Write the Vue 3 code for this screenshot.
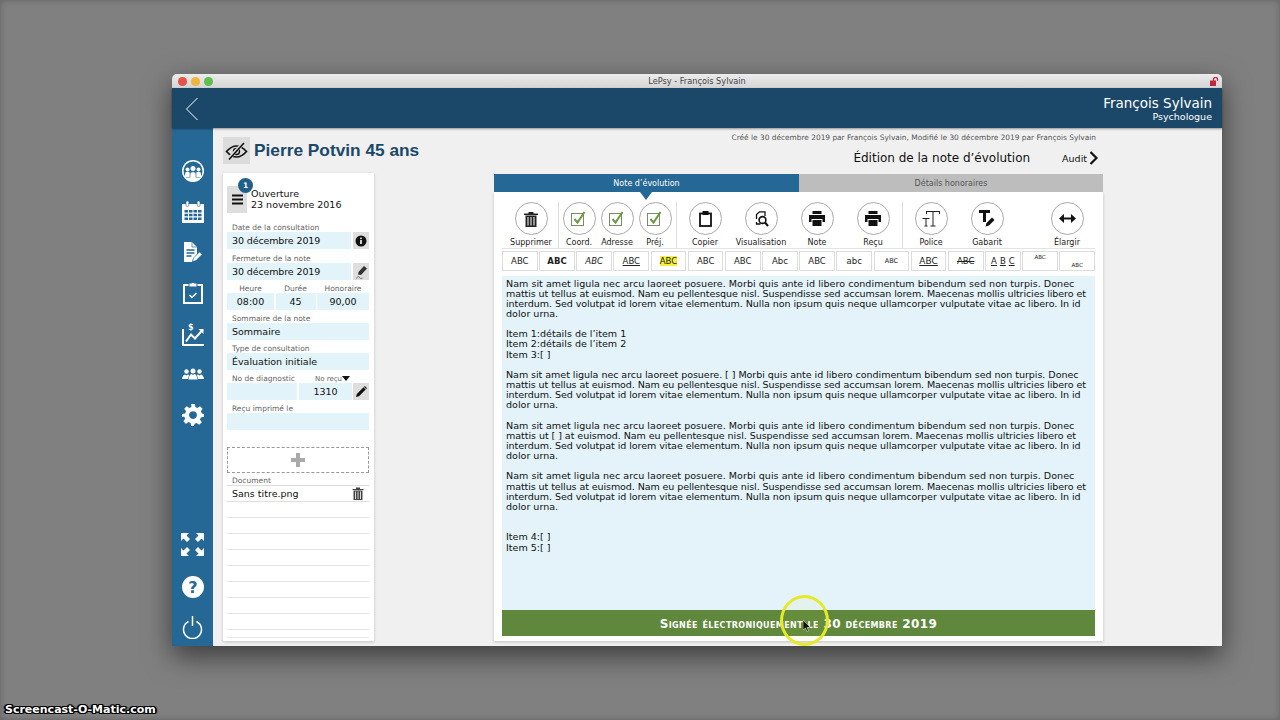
<script setup>
const fmtA = [
  ['ABC',''],['ABC','b'],['ABC','i'],['ABC','u'],['ABC','hl'],['ABC','n'],['ABC','n'],['Abc','n'],['ABC','n'],['abc','n'],['ABC','sm'],['ABC','u2'],['ABC','st'],['A B C','sp'],['ABC','sup'],['ABC','sub']
]
const L1 = 'Nam sit amet ligula nec arcu laoreet posuere. Morbi quis ante id libero condimentum bibendum sed non turpis. Donec'
const L2 = 'mattis ut tellus at euismod. Nam eu pellentesque nisl. Suspendisse sed accumsan lorem. Maecenas mollis ultricies libero et'
const L3 = 'interdum. Sed volutpat id lorem vitae elementum. Nulla non ipsum quis neque ullamcorper vulputate vitae ac libero. In id'
const L4 = 'dolor urna.'
const para1 = [[L1,'la'],[L2,'lb'],[L3,'lc'],[L4,'']]
const para2 = [['Nam sit amet ligula nec arcu laoreet posuere. [ ] Morbi quis ante id libero condimentum bibendum sed non turpis. Donec','ld'],[L2,'lb'],[L3,'lc'],[L4,'']]
const para3 = [[L1,'la'],['mattis ut [ ] at euismod. Nam eu pellentesque nisl. Suspendisse sed accumsan lorem. Maecenas mollis ultricies libero et','ld'],[L3,'lc'],[L4,'']]
const items = [['Item 1:détails de l’item 1',''],['Item 2:détails de l’item 2',''],['Item 3:[ ]','']]
const blocks = [para1,items,para2,para3,para1]
const lines = Array.from({length:8})
</script>

<template>
  <div class="desk">
    <div class="win">
      <div class="titlebar">
        <div class="lights"><i class="r"></i><i class="y"></i><i class="g"></i></div>
        <span class="wtitle">LePsy - François Sylvain</span>
        <svg class="lock" width="9" height="9" viewBox="0 0 9 9"><rect x="0" y="3.500" width="6" height="5.500" fill="#c0253c"/><path d="M3.500 4V2.300a2 2 0 0 1 4 0v1.500" fill="none" stroke="#c0253c" stroke-width="1.300"/></svg>
      </div>
      <header class="head">
        <svg class="back" width="14" height="24" viewBox="0 0 14 24"><path d="M12.500 1L1.500 12l11 11" fill="none" stroke="#fff" stroke-width="1"/></svg>
        <div class="user"><div class="uname">François Sylvain</div><div class="urole">Psychologue</div></div>
      </header>
      <div class="body">
        <nav class="side">
          <div class="side-top">
            <div class="slot"><svg width="22" height="22" viewBox="0 0 22 22"><circle cx="11" cy="11" r="11" fill="#fff"/><circle cx="11" cy="11" r="9.500" fill="#256795"/><g fill="#fff"><circle cx="5.500" cy="9.500" r="2"/><circle cx="16.500" cy="9.500" r="2"/><path d="M3 17v-3.500q0-1.800 2.500-1.800t2.500 1.800V17z"/><path d="M14 17v-3.500q0-1.800 2.500-1.800t2.500 1.800V17z"/><path d="M8 20v-6q0-2.300 3-2.300t3 2.300v6z" stroke="#256795" stroke-width=".7"/><circle cx="11" cy="8.500" r="2.500"/></g><path d="M3 17.500Q6 21.500 11 21.500t8-4z" fill="#fff"/></svg></div>
            <div class="slot"><svg width="22" height="22" viewBox="0 0 22 22"><path d="M0 3h22v19H0z" fill="#fff"/><g fill="#256795"><path d="M2.500 9h3.500v2.500H2.500zM7 9h3.500v2.500H7zM11.500 9H15v2.500h-3.500zM16 9h3.500v2.500H16zM2.500 12.800h3.500v2.500H2.500zM7 12.800h3.500v2.500H7zM11.500 12.800H15v2.500h-3.500zM16 12.800h3.500v2.500H16zM2.500 16.600h3.500v2.500H2.500zM7 16.600h3.500v2.500H7zM11.500 16.600H15v2.500h-3.500zM16 16.600h3.500v2.500H16z"/></g><g fill="#fff" stroke="#256795" stroke-width=".6"><rect x="4" y="0" width="2.800" height="5.500" rx="1.300"/><rect x="15.200" y="0" width="2.800" height="5.500" rx="1.300"/></g></svg></div>
            <div class="slot"><svg width="18" height="20" viewBox="0 0 18 20"><path d="M0 0h8l5 5v7l-4 5-1 3H0z" fill="#fff"/><path d="M2.500 8h8M2.500 11h8M2.500 14h5" stroke="#256795" stroke-width="1.300"/><path d="M8 0v5h5" fill="none" stroke="#256795" stroke-width=".7"/><path d="M8.500 19.500l1-3.500 6-6 2.500 2.500-6 6z" fill="#fff" stroke="#256795" stroke-width=".5"/></svg></div>
            <div class="slot"><svg width="20" height="22" viewBox="0 0 20 22"><path d="M5.500 3H1v18h18V3h-4.500" fill="none" stroke="#fff" stroke-width="2"/><path d="M6.500 4.500V1.500h2.300a1.300 1.300 0 0 1 2.400 0h2.300v3z" fill="#fff"/><path d="M6.500 13l2.500 2.500 4.500-4.500" fill="none" stroke="#fff" stroke-width="1.400"/></svg></div>
            <div class="slot"><svg width="22" height="25" viewBox="0 0 22 25"><path d="M1 8v16h21" fill="none" stroke="#fff" stroke-width="2"/><path d="M4 20.500l5-7 4 4 7-8" fill="none" stroke="#fff" stroke-width="2"/><path d="M16.500 8h5v5z" fill="#fff"/><text x="6" y="8.500" class="dollar">$</text></svg></div>
            <div class="slot"><svg width="22" height="12" viewBox="0 0 22 12"><g fill="#fff"><circle cx="4.500" cy="3.500" r="2.200"/><circle cx="11" cy="3" r="2.500"/><circle cx="17.500" cy="3.500" r="2.200"/><path d="M0 11q.5-4 3-4.500l1.500 1 1.500-1 1 .5-1 4z"/><path d="M22 11q-.5-4-3-4.500l-1.500 1-1.500-1-1 .5 1 4z"/><path d="M6.500 11.500q.5-5 3-5.500l1.500 1 1.500-1q2.500.5 3 5.500z"/></g></svg></div>
            <div class="slot"><svg width="22" height="22" viewBox="0 0 24 24"><path fill="#fff" fill-rule="evenodd" d="M10 0h4l.6 3.300 2.300 1L19.700 2.400l2.800 2.800-1.900 2.800 1 2.300L24 10.900v3l-3.400.8-1 2.300 2 2.800-2.800 2.800-2.800-2-2.300 1L13 24h-3l-.6-3.300-2.300-1-2.800 2-2.800-2.800 2-2.800-1-2.300L0 13.900v-3l3.400-.6 1-2.300-2-2.800 2.800-2.800 2.800 2 2.300-1zM12 7.800a4.300 4.300 0 1 0 .01 0z"/></svg></div>
          </div>
          <div class="side-bot">
            <svg class="ga" width="23" height="23" viewBox="0 0 23 23"><g fill="#fff"><path d="M0 0h8l-2.500 2.500L9 6 6 9 2.500 5.500 0 8z"/><path d="M23 0h-8l2.500 2.500L14 6l3 3 3.500-3.500L23 8z"/><path d="M0 23h8l-2.500-2.500L9 17l-3-3-3.500 3.500L0 15z"/><path d="M23 23h-8l2.500-2.500L14 17l3-3 3.500 3.500L23 15z"/></g></svg>
            <svg class="gb" width="22" height="22" viewBox="0 0 22 22"><circle cx="11" cy="11" r="11" fill="#fff"/><text x="11" y="17" text-anchor="middle" class="qm">?</text></svg>
            <svg width="21" height="23" viewBox="0 0 21 23"><path d="M6.500 5.500a9 9 0 1 0 8 0" fill="none" stroke="#fff" stroke-width="1.500"/><path d="M10.500 0v10" stroke="#fff" stroke-width="1.500"/></svg>
          </div>
        </nav>
        <main class="main">
          <div class="left">
            <div class="patient">
              <div class="eyebtn"><svg width="23" height="18" viewBox="0 0 22 18"><path d="M1 9.500Q6 4 11 4t10 5.500Q16 15 11 15T1 9.500z" fill="none" stroke="#111" stroke-width="1.700"/><circle cx="11" cy="9.500" r="3" fill="none" stroke="#111" stroke-width="1.400"/><path d="M3 17L18 1" stroke="#dcdcdc" stroke-width="3.400"/><path d="M3.500 17.500L18.500 1" stroke="#111" stroke-width="1.600"/></svg></div>
              <h1>Pierre Potvin 45 ans</h1>
            </div>
            <section class="card">
              <div class="open">
                <div class="menu"><span class="badge">1</span><svg width="11" height="11" viewBox="0 0 11 11"><path d="M0 1.500h11M0 5.500h11M0 9.500h11" stroke="#111" stroke-width="1.900"/></svg></div>
                <div class="opentxt">Ouverture<br>23 novembre 2016</div>
              </div>
              <label class="lab l1">Date de la consultation</label>
              <div class="row"><div class="fld grow date">30 décembre 2019</div><div class="ico"><svg width="12" height="12" viewBox="0 0 12 12"><circle cx="6" cy="6" r="5.500" fill="#111"/><rect x="5.200" y="5" width="1.600" height="4" fill="#fff"/><rect x="5.200" y="2.600" width="1.600" height="1.500" fill="#fff"/></svg></div></div>
              <label class="lab l2">Fermeture de la note</label>
              <div class="row"><div class="fld grow date">30 décembre 2019</div><div class="ico"><svg width="13" height="14" viewBox="0 0 13 14"><path d="M3 9.500L3.500 7l5.500-6 3 2.500-6 6.500z" fill="#333"/><path d="M1 13.500q3-3 3.500-1t3 .5" fill="none" stroke="#444" stroke-width=".7"/></svg></div></div>
              <div class="trio-lab"><span>Heure</span><span>Durée</span><span>Honoraire</span></div>
              <div class="trio"><div class="fld c">08:00</div><div class="fld c">45</div><div class="fld c">90,00</div></div>
              <label class="lab">Sommaire de la note</label>
              <div class="fld">Sommaire</div>
              <label class="lab">Type de consultation</label>
              <div class="fld">Évaluation initiale</div>
              <div class="diag-lab"><span>No de diagnostic</span><span class="norecu">No reçu<i class="tri"></i></span></div>
              <div class="row"><div class="fld d1"></div><div class="fld d2 c">1310</div><div class="ico"><svg width="11" height="11" viewBox="0 0 11 11"><path d="M0 11l.8-3L7.500 1.300l2.200 2.200L3 10.200z" fill="#111"/><path d="M8 .8l.8-.8 2.200 2.200-.8.8z" fill="#111"/></svg></div></div>
              <label class="lab">Reçu imprimé le</label>
              <div class="fld"></div>
              <div class="drop"><svg width="14" height="14" viewBox="0 0 14 14"><path d="M5 0h4v5h5v4H9v5H5V9H0V5h5z" fill="#aaa"/></svg></div>
              <label class="lab doc">Document</label>
              <div class="docrow"><span>Sans titre.png</span><svg width="12" height="13" viewBox="0 0 12 13"><path d="M.5 2h11v1H.5zM4 .5h4V2H4zM1.500 3.500h9V13h-9z" fill="#444"/><path d="M3.500 4.500v7.500M6 4.500v7.500M8.500 4.500v7.500" stroke="#fff" stroke-width=".8"/></svg></div>
              <div v-for="(l,i) in lines" :key="i" class="docline"></div>
              <div class="doclast"></div>
            </section>
          </div>
          <div class="right">
            <div class="created">Créé le 30 décembre 2019 par François Sylvain, Modifié le 30 décembre 2019 par François Sylvain</div>
            <div class="edit"><span class="etitle">Édition de la note d’évolution</span><span class="audit">Audit<svg width="9" height="14" viewBox="0 0 9 14"><path d="M1.500 1l6 6-6 6" fill="none" stroke="#111" stroke-width="2.200"/></svg></span></div>
            <div class="tabs"><div class="tab on">Note d’évolution</div><div class="tab off">Détails honoraires</div></div>
            <section class="panel">
              <div class="tools">
                <div class="tool"><span class="circ"><svg width="14" height="16" viewBox="0 0 14 16"><path d="M0 2.500h14V4H0zM4.500 1h5v1.500h-5zM1.500 4.500h11V16h-11z" fill="#222"/><path d="M4 6v8.500M7 6v8.500M10 6v8.500" stroke="#fff" stroke-width="1"/></svg></span>Supprimer</div>
                <i class="sep s1"></i>
                <div class="tool w2"><span class="circ"><svg width="16" height="15" viewBox="0 0 16 15"><rect x=".5" y="2.500" width="12" height="12" fill="none" stroke="#7a8a6a"/><path d="M3.500 8l3 3.500L13.500 1" fill="none" stroke="#6d9a3f" stroke-width="2"/></svg></span>Coord.</div>
                <div class="tool w2"><span class="circ"><svg width="16" height="15" viewBox="0 0 16 15"><rect x=".5" y="2.500" width="12" height="12" fill="none" stroke="#7a8a6a"/><path d="M3.500 8l3 3.500L13.500 1" fill="none" stroke="#6d9a3f" stroke-width="2"/></svg></span>Adresse</div>
                <div class="tool w2"><span class="circ"><svg width="16" height="15" viewBox="0 0 16 15"><rect x=".5" y="2.500" width="12" height="12" fill="none" stroke="#7a8a6a"/><path d="M3.500 8l3 3.500L13.500 1" fill="none" stroke="#6d9a3f" stroke-width="2"/></svg></span>Préj.</div>
                <i class="sep s2"></i>
                <div class="tool"><span class="circ"><svg width="13" height="16" viewBox="0 0 13 16"><rect x="1" y="2.500" width="11" height="12.500" fill="none" stroke="#111" stroke-width="1.800"/><rect x="3.500" y="0" width="6" height="4" fill="#111"/></svg></span>Copier</div>
                <div class="tool"><span class="circ"><svg width="15" height="16" viewBox="0 0 15 16"><path d="M2.500 8V3.500L5.500.8h5.500V5" fill="none" stroke="#111" stroke-width="1.300"/><path d="M2.500 11v2h4" fill="none" stroke="#111" stroke-width="1.300"/><circle cx="8.500" cy="9" r="3.400" fill="none" stroke="#111" stroke-width="1.600"/><path d="M11 11.500l3 3.500" stroke="#111" stroke-width="2"/></svg></span>Visualisation</div>
                <div class="tool"><span class="circ"><svg width="16" height="15" viewBox="0 0 16 15"><path d="M3.500 0h9v3h-9zM0 4h16v7h-2.500V8h-11v3H0zM3.500 9h9v6h-9z" fill="#111"/></svg></span>Note</div>
                <div class="tool"><span class="circ"><svg width="16" height="15" viewBox="0 0 16 15"><path d="M3.500 0h9v3h-9zM0 4h16v7h-2.500V8h-11v3H0zM3.500 9h9v6h-9z" fill="#111"/></svg></span>Reçu</div>
                <i class="sep s3"></i>
                <div class="tool"><span class="circ"><svg width="18" height="17" viewBox="0 0 18 17"><path d="M4.500 1.500h13M11 1.500V16M8.500 16h5M0.500 8.500h7M4 8.500V16M2.500 16h3" fill="none" stroke="#222" stroke-width="1"/><path d="M4.500 1v3M17.500 1v3" stroke="#222" stroke-width="1"/></svg></span>Police</div>
                <div class="tool"><span class="circ"><svg width="17" height="17" viewBox="0 0 17 17"><path d="M0 0h11v3H7v9H4V3H0z" fill="#111"/><path d="M6.500 16.500l1-3.500L13 7.500l2.500 2.500L10 15.500z" fill="#111"/></svg></span>Gabarit</div>
                <div class="tool w9"><span class="circ"><svg width="17" height="9" viewBox="0 0 17 9"><path d="M4 3.500h9v2H4z" fill="#111"/><path d="M5 0v9L0 4.500zM12 0v9l5-4.500z" fill="#111"/></svg></span>Élargir</div>
              </div>
              <div class="fmt">
                <div v-for="(f,i) in fmtA" :key="i" class="fb" :class="f[1]"><span v-for="(w,k) in f[0].split(' ')" :key="k">{{ w }}</span></div>
              </div>
              <div class="note">
                <div class="notetext">
                  <template v-for="(b,i) in blocks" :key="i">
                    <p><span v-for="(l,j) in b" :key="j" class="ln" :class="l[1]">{{ l[0] }}</span></p>
                  </template>
                  <p class="items"><span class="ln">Item 4:[ ]</span><span class="ln">Item 5:[ ]</span></p>
                </div>
                <div class="sign">
                  <span class="signtxt">Signée électroniquement le 30 décembre 2019</span>
                  <span class="halo"></span>
                  <svg class="cursor" width="8" height="12" viewBox="0 0 8 12"><path d="M0 0v10l2.500-2 1.500 3.500 1.500-.7L4 7.500h3.500z" fill="#111" stroke="#fff" stroke-width=".5"/></svg>
                </div>
              </div>
            </section>
          </div>
        </main>
      </div>
    </div>
    <div class="wm">Screencast-O-Matic.com</div>
  </div>
</template>

<style>
html,body{margin:0;padding:0;background:#808080}
</style>
<style scoped>
.desk{position:relative;width:1280px;height:720px;overflow:hidden;background:#808080;box-shadow:inset 0 0 6px rgba(0,0,0,.25);font-family:"DejaVu Sans",sans-serif;color:#111;padding:74px 58px 0 172px;box-sizing:border-box}
.win{width:1050px;height:572px;display:flex;flex-direction:column;border-radius:5px 5px 0 0;box-shadow:0 10px 28px rgba(0,0,0,.55);position:relative}
.titlebar{height:14px;background:linear-gradient(#ececec,#d4d4d4);position:relative;display:flex;align-items:center;justify-content:center;flex:none;border-radius:5px 5px 0 0}
.lights{position:absolute;left:6px;top:3px;display:flex;gap:4.500px}
.lights i{width:8.500px;height:8.500px;border-radius:50%;display:block}
.r{background:#e5534b}.y{background:#eeb63e}.g{background:#5fc04e}
.wtitle{font-size:8.200px;color:#444}
.lock{position:absolute;right:3px;top:3px}
.head{height:40px;background:#1b4869;display:flex;justify-content:space-between;flex:none;box-shadow:0 1px 2px rgba(0,0,0,.4);position:relative;z-index:2}
.back{margin:9px 0 0 13px}
.user{text-align:right;color:#fff;padding:8px 10px 0 0}
.uname{font-size:13.500px;line-height:15px}
.urole{font-size:9.500px;line-height:11px}
.body{flex:1;display:flex;min-height:0}
.side{width:41px;background:#256795;display:flex;flex-direction:column;justify-content:space-between;align-items:center;padding:22.700px 0 7.500px;box-sizing:border-box;flex:none}
.side-top{display:flex;flex-direction:column;align-items:center}
.slot{height:40.670px;display:flex;align-items:center;justify-content:center}
.side-bot{display:flex;flex-direction:column;align-items:center}
.side-bot svg{display:block}
.ga{margin-bottom:20.500px}
.gb{margin-bottom:17.500px}
.dollar{font:bold 8px "DejaVu Sans";fill:#fff}
.qm{font:bold 16px "DejaVu Sans";fill:#256795}
.main{flex:1;background:#f0f0f0;display:flex;min-width:0}
.left{width:151px;margin-left:10px;flex:none;display:flex;flex-direction:column}
.patient{display:flex;align-items:center;height:27px;margin-top:9px;gap:4px}
.eyebtn{width:27px;height:27px;background:#dcdcdc;display:flex;align-items:center;justify-content:center;flex:none}
h1{margin:0;font:bold 17.300px "Liberation Sans",sans-serif;color:#1b4869;white-space:nowrap}
.card{background:#fff;margin-top:9px;height:468px;padding:0 5px 0 4px;box-sizing:border-box;width:151px;box-shadow:0 1px 3px rgba(0,0,0,.2);overflow:hidden}
.open{display:flex;height:49px;padding-top:13px;box-sizing:border-box}
.menu{position:relative;width:20px;height:27px;background:#dedede;display:flex;align-items:center;justify-content:center;flex:none}
.badge{position:absolute;left:11px;top:-8px;width:15px;height:15px;border-radius:50%;background:#22608c;color:#fff;font-size:7.500px;font-weight:700;display:flex;align-items:center;justify-content:center}
.opentxt{font-size:9.500px;line-height:11px;padding:2px 0 0 4px;white-space:nowrap}
.lab{display:block;font-size:7.500px;color:#666;height:13px;line-height:10px;padding:4px 0 0 5px;box-sizing:border-box;white-space:nowrap}
.l1{height:10px;padding-top:1px}
.l2{height:14px;padding-top:5px}
.row{display:flex;height:17px;gap:2px}
.fld{background:#e2f3f9;height:17px;line-height:17px;font-size:9.500px;padding-left:5px;box-sizing:border-box;white-space:nowrap}
.grow{flex:1}
.date{letter-spacing:-.12px}
.c{text-align:center;padding-left:0}
.ico{width:16px;height:17px;background:#dedede;display:flex;align-items:center;justify-content:center;flex:none}
.trio-lab{display:grid;grid-template-columns:47px 40px 52px;column-gap:1.500px;font-size:7.500px;color:#666;text-align:center;height:13px;line-height:10px;padding-top:4px;box-sizing:border-box}
.trio{display:grid;grid-template-columns:47px 40px 52px;column-gap:1.500px}
.diag-lab{display:flex;justify-content:space-between;font-size:7.500px;color:#666;padding:4px 0 0 5px;box-sizing:border-box;height:13px;line-height:10px;white-space:nowrap}
.norecu{font-size:7px;margin-right:27px;position:relative}
.tri{position:absolute;left:100%;top:2px;width:0;height:0;border:4px solid transparent;border-top:5px solid #111;border-bottom:0}
.d1{width:70px}
.d2{flex:1;margin-right:-1px}
.drop{margin-top:17px;height:26px;border:1px dashed #999;box-sizing:border-box;display:flex;align-items:center;justify-content:center}
.doc{height:13px;padding-top:3px;border-bottom:1px solid #ddd}
.docrow{height:16px;border-bottom:1px solid #e0e0e0;box-sizing:border-box;font-size:9.500px;display:flex;justify-content:space-between;align-items:center;padding:0 5px}
.docline{height:16px;border-bottom:1px solid #e4e4e4;box-sizing:border-box}
.doclast{height:8px;border-bottom:1px solid #e8e8e8;box-sizing:border-box}
.right{width:609px;margin-left:120px;flex:none;display:flex;flex-direction:column}
.created{font-size:7.400px;color:#555;text-align:right;height:18px;line-height:19px;padding-right:7px;white-space:nowrap}
.edit{height:24px;display:flex;justify-content:flex-end;align-items:center;padding-right:5px}
.etitle{font-size:12px;margin-right:32px}
.audit{font-size:9.500px;display:flex;align-items:center;gap:2px}
.tabs{display:flex;height:18px;margin-top:4px;flex:none}
.tab{display:flex;align-items:center;justify-content:center;font-size:8px;position:relative}
.on{width:305px;background:#256795;color:#fff}
.on::after{content:"";position:absolute;left:146px;top:18px;border:6.500px solid transparent;border-top:8px solid #256795;border-bottom:0;z-index:1}
.off{flex:1;background:#bdbdbd;color:#555}
.panel{background:#fff;height:449px;width:609px;box-shadow:0 1px 3px rgba(0,0,0,.2);padding:0 8px;box-sizing:border-box;display:flex;flex-direction:column}
.tools{height:57px;display:flex;flex:none;padding:10px 0 0 1px;box-sizing:border-box;border-bottom:1px solid #e4e4e4}
.tool{width:56px;flex:none;display:flex;flex-direction:column;align-items:center;font-size:8px;line-height:10px;gap:3px;white-space:nowrap;color:#222}
.circ{width:33px;height:33px;border:1px solid #aaa;border-radius:50%;box-sizing:border-box;display:flex;align-items:center;justify-content:center;background:#fff;flex:none}
.sep{display:block;width:1px;height:46px;background:#ddd;flex:none}
.s1{margin-left:-1px;margin-right:1px}
.w2{width:38px}
.s2{margin-left:2px}
.s3{margin-left:1px}
.w9{margin-left:24px}
.fmt{display:grid;grid-template-columns:repeat(16,1fr);gap:1.500px;height:20px;margin-top:2px;flex:none}
.fb{border:1px solid #ddd;box-sizing:border-box;display:flex;align-items:center;justify-content:center;font-size:8.500px;color:#222;background:#fff}
.b{font-weight:700}
.i{font-style:italic}
.u span{text-decoration:underline}
.hl span{background:#f5f03a}
.sm{font-size:6.500px}
.u2{font-size:9px}
.u2 span{text-decoration:underline}
.st span{text-decoration:line-through}
.sp span{text-decoration:underline}
.sp span+span{margin-left:3px}
.sup{font-size:5.500px;align-items:flex-start;padding-top:2px}
.sub{font-size:5.500px;align-items:flex-end;padding-bottom:2px}
.note{background:#e3f3f9;flex:1;margin-top:5px;display:flex;flex-direction:column;min-height:0;margin-bottom:5px}
.notetext{flex:1;padding:2.500px 0 0 4px;font-size:9.550px;line-height:10.160px;white-space:nowrap;color:#111}
.ln{display:block}
.la{letter-spacing:.026px}
.lb{letter-spacing:-.1px}
.lc{letter-spacing:-.066px}
.ld{letter-spacing:-.055px}
p{margin:0 0 10.160px}
.items{margin-top:20.320px}
.sign{position:relative;height:26px;background:#5f883d;color:#fff;display:flex;align-items:center;justify-content:center;flex:none}
.signtxt{font:700 12px "DejaVu Sans",sans-serif;font-variant:small-caps;letter-spacing:.39px;padding-top:1px}
.halo{position:absolute;left:278px;top:-15px;width:49px;height:51px;border:3px solid #e6e82a;border-radius:50%;box-sizing:border-box;background:rgba(230,235,40,.05);z-index:3}
.cursor{position:absolute;left:301px;top:10px;z-index:4}
.wm{position:absolute;left:5px;bottom:3px;color:#fff;font:700 11px "DejaVu Sans",sans-serif;line-height:15px;white-space:nowrap;text-shadow:1px 0 0 #000,-1px 0 0 #000,0 1px 0 #000,0 -1px 0 #000,1px 1px 0 #000,-1px -1px 0 #000,1px -1px 0 #000,-1px 1px 0 #000,2px 0 1px #000,-2px 0 1px #000}
</style>
